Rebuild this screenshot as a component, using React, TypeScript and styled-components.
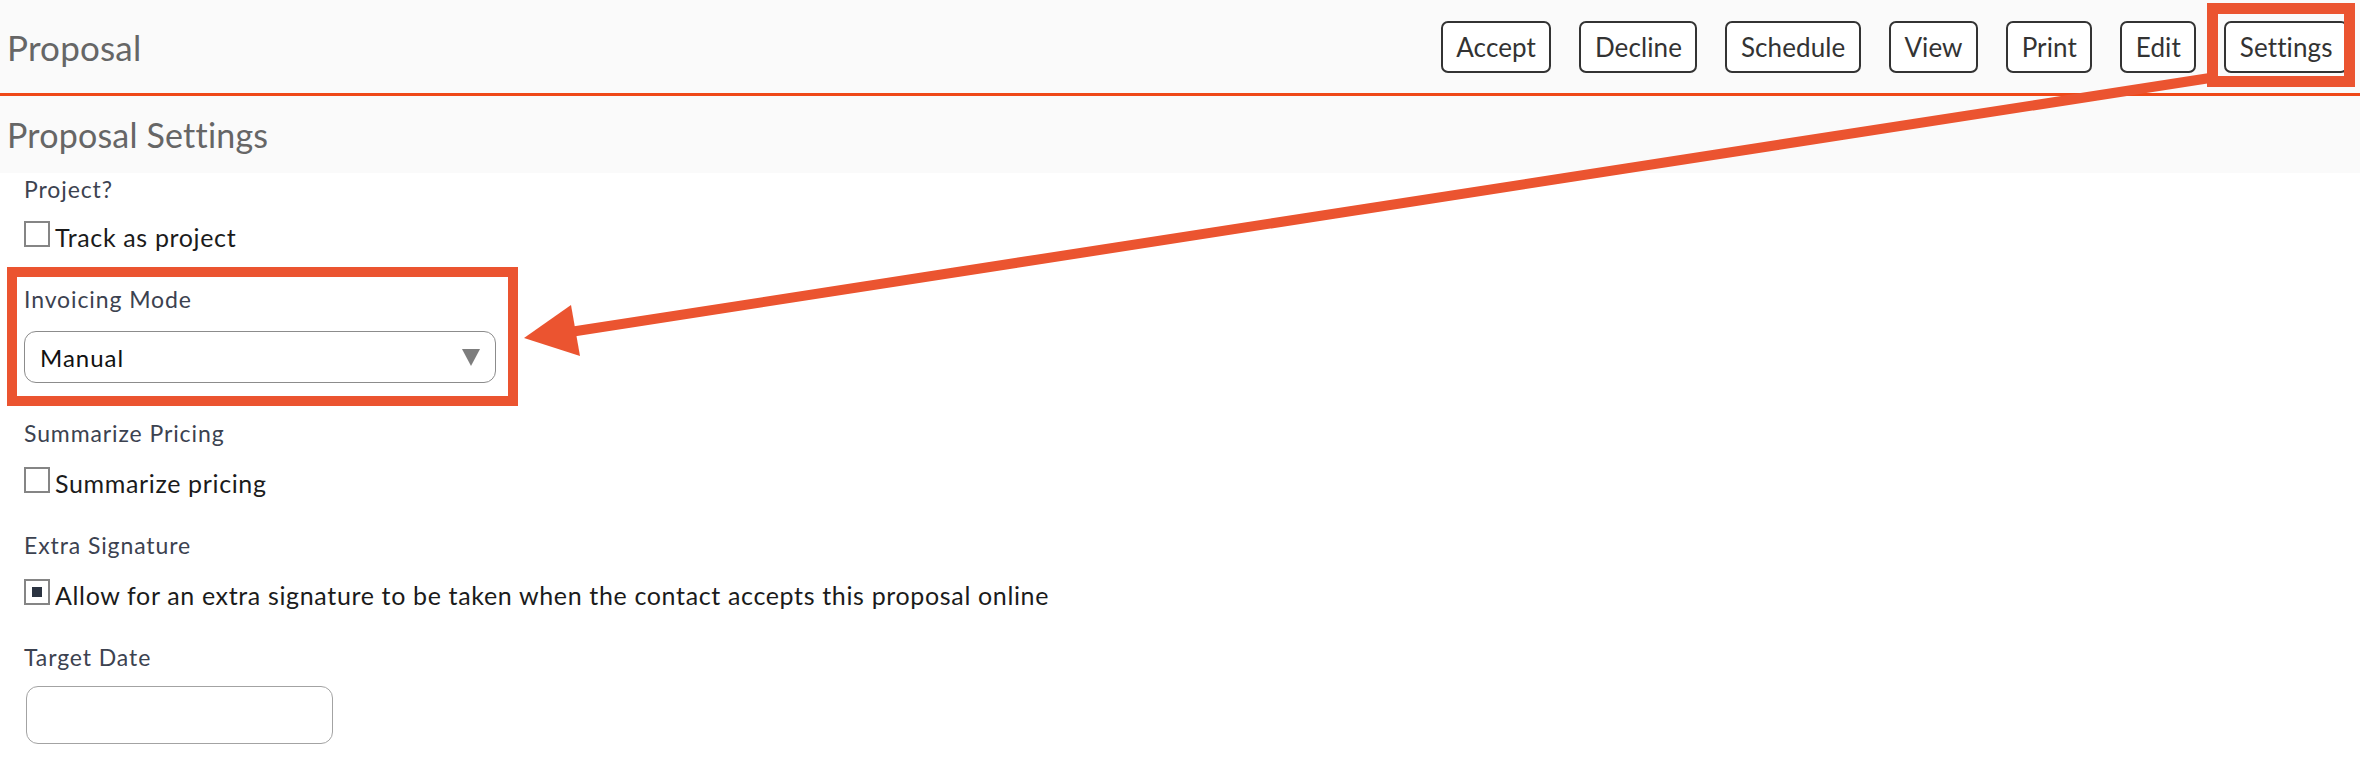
import styled, { createGlobalStyle } from "styled-components";

const GlobalStyle = createGlobalStyle`
  html, body {
    margin: 0;
    padding: 0;
    background: #ffffff;
    font-family: Lato, "Open Sans", Arial, sans-serif;
  }
`;

const Page = styled.div`
  position: relative;
  width: 2360px;
  height: 762px;
  overflow: hidden;
  background: #ffffff;
`;

// top bar with title and action buttons
const TopBar = styled.header`
  display: flex;
  align-items: center;
  justify-content: space-between;
  height: 93px;
  padding: 0 12px 0 7px;
  background: #fafafa;
  border-bottom: 3px solid #ef4818;
`;

const PageTitle = styled.h1`
  margin: 0;
  font-size: 35px;
  font-weight: 400;
  color: #666666;
  letter-spacing: 0.2px;
`;

const Actions = styled.nav`
  display: flex;
  align-items: center;
  gap: 28px;
`;

const ActionButton = styled.button`
  height: 52px;
  padding: 0 13.5px;
  border: 2px solid #333333;
  border-radius: 7px;
  background: #ffffff;
  color: #333333;
  font-family: inherit;
  font-size: 26px;
  letter-spacing: 0.1px;
  cursor: pointer;
`;

const SectionBand = styled.div`
  display: flex;
  align-items: center;
  height: 77px;
  padding-left: 7px;
  background: #fafafa;
`;

const SectionTitle = styled.h2`
  margin: 0;
  font-size: 34px;
  font-weight: 400;
  color: #666666;
  letter-spacing: 0.2px;
`;

const Form = styled.form`
  display: flex;
  flex-direction: column;
  gap: 36px;
  padding: 2px 0 0 24px;
`;

const Field = styled.div<{ $gap?: number }>`
  display: flex;
  flex-direction: column;
  align-items: flex-start;
  gap: ${(p) => p.$gap ?? 18}px;
`;

const FieldLabel = styled.label`
  font-size: 23px;
  line-height: 28px;
  color: #3c4250;
  letter-spacing: 0.9px;
`;

const CheckRow = styled.label`
  display: flex;
  align-items: flex-start;
  height: 28px;
  gap: 5px;
  cursor: pointer;
`;

const Box = styled.span<{ $checked?: boolean }>`
  display: flex;
  align-items: center;
  justify-content: center;
  width: 26px;
  height: 26px;
  box-sizing: border-box;
  border: 2px solid #858585;
  background: #ffffff;

  &::after {
    content: "";
    display: ${(p) => (p.$checked ? "block" : "none")};
    width: 10px;
    height: 10px;
    background: #2b3341;
  }
`;

const CheckText = styled.span`
  margin-top: 3px;
  font-size: 25px;
  line-height: 26px;
  color: #1b1b1b;
  letter-spacing: 0.65px;
`;

const SelectBox = styled.div`
  display: flex;
  align-items: center;
  justify-content: space-between;
  box-sizing: border-box;
  width: 472px;
  height: 52px;
  padding: 0 15px 0 15px;
  border: 1px solid #8c8c8c;
  border-radius: 12px;
  background: #ffffff;
  font-size: 24px;
  color: #111111;
  letter-spacing: 1px;
`;

const DateInput = styled.input`
  box-sizing: border-box;
  width: 307px;
  height: 58px;
  margin-left: 2px;
  border: 1px solid #a3a3a3;
  border-radius: 12px;
  background: #ffffff;
  font-family: inherit;
  font-size: 24px;
  outline: none;
`;

// annotation overlays drawn on top of the screenshot
const Highlight = styled.div<{ $x: number; $y: number; $w: number; $h: number; $t: number }>`
  position: absolute;
  left: ${(p) => p.$x}px;
  top: ${(p) => p.$y}px;
  width: ${(p) => p.$w}px;
  height: ${(p) => p.$h}px;
  box-sizing: border-box;
  border: ${(p) => p.$t}px solid #eb5430;
  pointer-events: none;
`;

const ArrowLayer = styled.svg`
  position: absolute;
  left: 0;
  top: 0;
  pointer-events: none;
`;

const actions = ["Accept", "Decline", "Schedule", "View", "Print", "Edit", "Settings"];

function Checkbox({ checked, children }: { checked?: boolean; children: string }) {
  return (
    <CheckRow>
      <Box $checked={checked} />
      <CheckText>{children}</CheckText>
    </CheckRow>
  );
}

export default function App() {
  return (
    <Page>
      <GlobalStyle />
      <TopBar>
        <PageTitle>Proposal</PageTitle>
        <Actions>
          {actions.map((a) => (
            <ActionButton key={a} type="button">
              {a}
            </ActionButton>
          ))}
        </Actions>
      </TopBar>

      <SectionBand>
        <SectionTitle>Proposal Settings</SectionTitle>
      </SectionBand>

      <Form onSubmit={(e) => e.preventDefault()}>
        <Field>
          <FieldLabel>Project?</FieldLabel>
          <Checkbox>Track as project</Checkbox>
        </Field>

        <Field>
          <FieldLabel>Invoicing Mode</FieldLabel>
          <SelectBox>
            <span>Manual</span>
            <svg width="18" height="17" viewBox="0 0 18 17">
              <polygon points="0,0 18,0 9,17" fill="#7d7d7d" />
            </svg>
          </SelectBox>
        </Field>

        <Field $gap={20}>
          <FieldLabel>Summarize Pricing</FieldLabel>
          <Checkbox>Summarize pricing</Checkbox>
        </Field>

        <Field $gap={20}>
          <FieldLabel>Extra Signature</FieldLabel>
          <Checkbox checked>
            Allow for an extra signature to be taken when the contact accepts this proposal online
          </Checkbox>
        </Field>

        <Field $gap={15}>
          <FieldLabel>Target Date</FieldLabel>
          <DateInput type="text" />
        </Field>
      </Form>

      <Highlight $x={2207} $y={3} $w={148} $h={84} $t={11} />
      <Highlight $x={7} $y={267} $w={511} $h={139} $t={10} />

      <ArrowLayer width="2360" height="762" viewBox="0 0 2360 762">
        <line x1="2210" y1="78" x2="570" y2="332" stroke="#eb5430" strokeWidth="10" />
        <polygon points="524,338 571,305 580,356" fill="#eb5430" />
      </ArrowLayer>
    </Page>
  );
}
